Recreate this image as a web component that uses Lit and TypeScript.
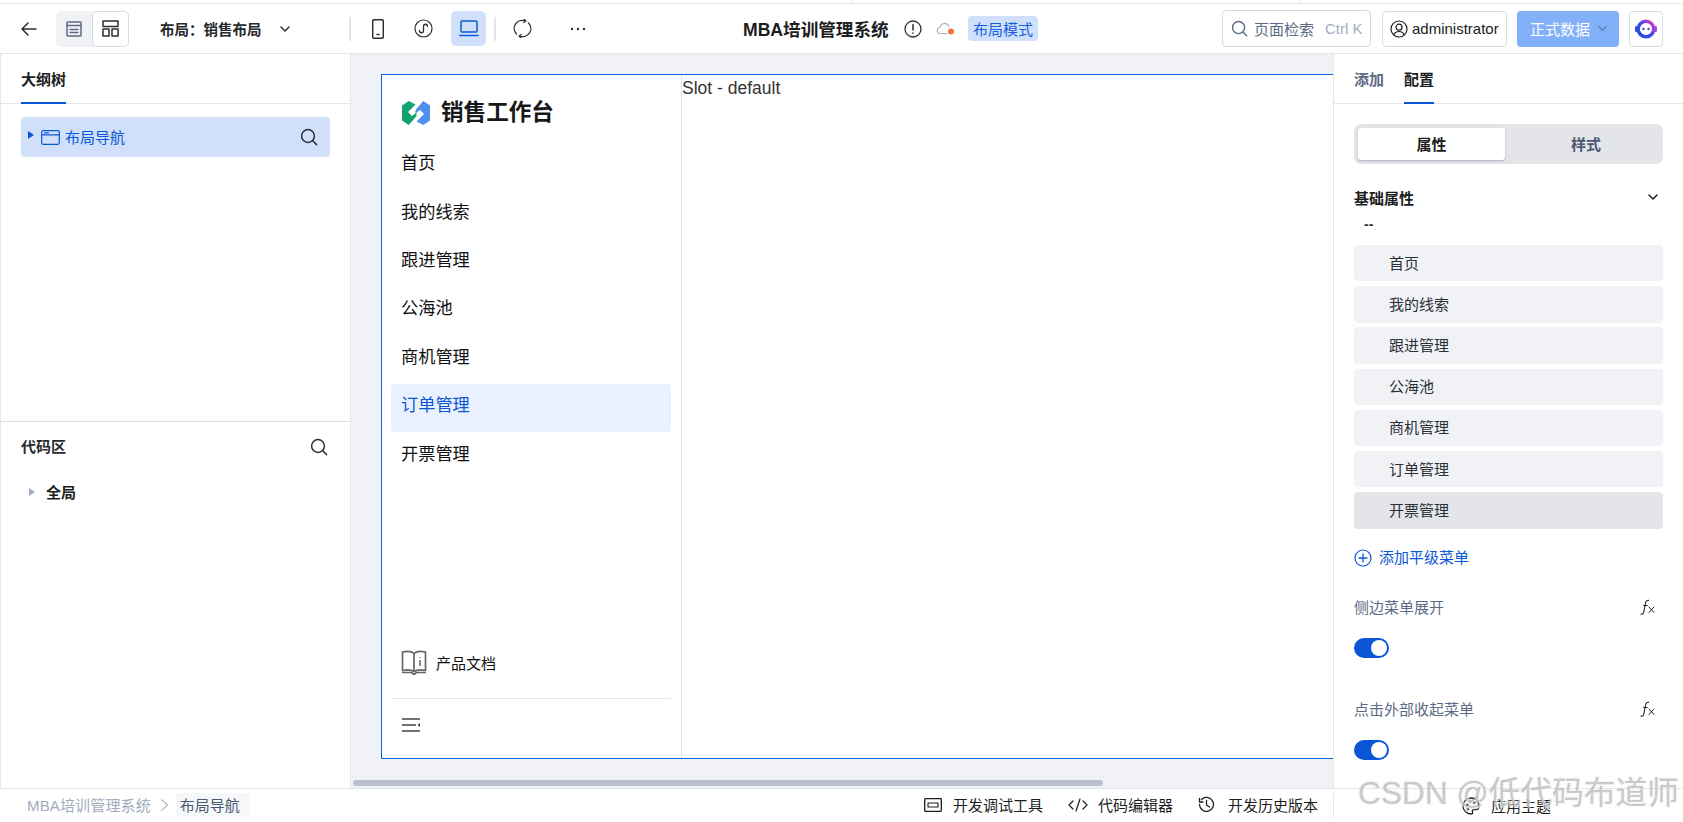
import { LitElement, html, css, svg } from "lit";
import { customElement } from "lit/decorators.js";

const s = (w: number, h: number, vb: string, body: any, cls = "") =>
  html`<svg class=${cls} width=${w} height=${h} viewBox=${vb} fill="none" stroke="currentColor" stroke-width="1.5" stroke-linecap="round" stroke-linejoin="round">${body}</svg>`;

const searchIcon = (size = 18) => s(size, size, "0 0 18 18", svg`<circle cx="8" cy="8" r="6.4"/><path d="M12.7 12.7 16.6 16.6"/>`);
const chevron = (size = 12) => s(size, size, "0 0 12 12", svg`<path d="M2 4l4 4 4-4"/>`);
const fx = () => html`<svg width="16" height="16" viewBox="0 0 16 16" fill="none" stroke="#1f2329" stroke-width="1.1" stroke-linecap="round"><path d="M1 15c2 .4 2.6-.6 3-3l1.6-8c.4-2 1.400-3 3-2.600"/><path d="M3.600 6.500h3.600"/><path d="M9 8l5 5.500M14 8l-5 5.500" stroke-width="1"/></svg>`;

const menu = ["首页", "我的线索", "跟进管理", "公海池", "商机管理", "订单管理", "开票管理"];

@customElement("app-root")
export class AppRoot extends LitElement {
  static styles = css`
    :host {
      display: block;
      position: relative;
      width: 1683px;
      height: 822px;
      overflow: hidden;
      background: #fff;
      color: #1b1d21;
      font-family: "Liberation Sans", "Noto Sans CJK SC", sans-serif;
      font-size: 15px;
    }
    * { box-sizing: border-box; }
    svg { display: block; flex: none; }

    .strip { height: 4px; display: flex; border-bottom: 1px solid #e4e6ea; }
    .strip i { width: 448px; border-right: 1px solid #e4e6ea; }
    .strip i:first-child { width: 853px; }

    .top { height: 50px; display: flex; align-items: center; border-bottom: 1px solid #e2e5ea; padding: 0 20px 0 21px; }
    .top-left { width: 722px; flex: none; display: flex; align-items: center; }
    .back { color: #2b2f36; margin-right: 19px; }
    .view-group { display: flex; width: 73px; height: 36px; background: #f0f2f5; border-radius: 5px; }
    .view-a { width: 36px; display: flex; align-items: center; justify-content: center; color: #5d6b85; }
    .view-b { width: 37px; display: flex; align-items: center; justify-content: center; background: #fff; border: 1px solid #d9dce3; border-radius: 5px; color: #2b2f36; }
    .layout-name { margin-left: 31px; font-weight: 700; font-size: 14.500px; width: 104px; white-space: nowrap; color: #26292e; }
    .layout-chev { margin-left: 15px; color: #2b2f36; }
    .vr { width: 2px; height: 24px; background: #e3e5e9; flex: none; }
    .vr.first { margin-left: 58px; }
    .vr.second { margin-left: 8px; }
    .tool { width: 35px; height: 35px; flex: none; display: flex; align-items: center; justify-content: center; border-radius: 5px; color: #2b2f36; margin-left: 10px; }
    .tool.t-first { margin-left: 9px; }
    .tool.t-mini { margin-left: 11px; }
    .tool.t-sync { margin-left: 9px; }
    .tool.t-more { margin-left: 20px; }
    .tool.on { background: #d0e0fa; color: #0a5bdc; }
    .title { font-size: 17.600px; font-weight: 700; white-space: nowrap; width: 146px; }
    .center { display: flex; align-items: center; }
    .info { margin-left: 15px; color: #2b2f36; }
    .cloud { margin-left: 14px; }
    .tag { margin-left: 13px; height: 25px; width: 70px; display: flex; align-items: center; justify-content: center; border-radius: 4px; background: #d0e0fa; color: #1460de; font-size: 15px; }
    .top-right { margin-left: auto; display: flex; align-items: center; }
    .search { width: 149px; height: 37px; border: 1px solid #d5d9e2; border-radius: 4px; display: flex; align-items: center; padding-left: 8px; color: #5d6b85; }
    .search span { margin-left: 6px; white-space: nowrap; }
    .search em { font-style: normal; color: #a3adbd; margin-left: 11px; white-space: nowrap; }
    .user { margin-left: 11px; width: 125px; height: 36px; border: 1px solid #d9dce3; border-radius: 4px; display: flex; align-items: center; padding-left: 7px; gap: 4px; }
    .publish { margin-left: 10px; width: 102px; height: 36px; border-radius: 4px; background: #82b1fa; color: #fff; display: flex; align-items: center; padding-left: 13px; white-space: nowrap; }
    .publish svg { margin-left: 7px; color: #5f7fb3; }
    .bot { margin-left: 10px; width: 34px; height: 36px; border: 1px solid #d9dce3; border-radius: 4px; display: flex; align-items: center; justify-content: center; }

    .main { height: 734px; display: flex; }
    .left { width: 351px; flex: none; border-left: 1px solid #e4e6ea; border-right: 1px solid #e2e5ea; }
    .tabs { height: 50px; border-bottom: 1px solid #e2e5ea; display: flex; gap: 20px; }
    .tab { height: 50px; display: flex; align-items: center; font-weight: 700; color: #5d6b85; white-space: nowrap; padding-bottom: 2px; }
    .tab.on { color: #1b1d21; border-bottom: 2px solid #0a56d6; padding-bottom: 0; }
    .outline { height: 368px; border-bottom: 1px solid #dadde5; }
    .outline .tabs { padding-left: 20px; }
    .tree { margin: 13px 20px 0 20px; height: 40px; border-radius: 4px; background: #d0e0fa; display: flex; align-items: center; padding-left: 7px; color: #0a56d6; }
    .tree .frame-icon { margin-left: 1px; }
    .tree .name { margin-left: 5px; white-space: nowrap; padding-bottom: 2px; }
    .tree .mag { margin-left: auto; margin-right: 12px; color: #2b2f36; }
    .caret { width: 0; height: 0; border-style: solid; border-width: 4px 0 4px 6px; border-color: transparent transparent transparent currentColor; margin-right: 6px; flex: none; margin-top: -4px; }
    .code-head { height: 50px; display: flex; align-items: center; justify-content: space-between; padding: 0 22px 0 20px; font-weight: 700; color: #26292e; }
    .code-head span { padding-bottom: 3px; }
    .code-head svg { color: #2b2f36; }
    .code-row { height: 40px; display: flex; align-items: center; padding-left: 28px; font-weight: 700; }
    .code-row span:last-child { padding-bottom: 2px; }
    .code-row .caret { color: #a3adbd; margin: 0 11px 0 0; }

    .canvas { flex: 1; min-width: 0; background: #f0f2f5; padding: 20px 0 0 30px; display: flex; flex-direction: column; }
    .frame { height: 685px; background: #fff; border: 1px solid #0f62e6; border-right: 0; display: flex; flex: none; }
    .side { width: 300px; flex: none; border-right: 1px solid #e5e5e5; display: flex; flex-direction: column; color: #111; }
    .logo { display: flex; align-items: center; gap: 11px; padding: 26px 0 13px 20px; }
    .logo b { font-size: 22.600px; line-height: 24px; white-space: nowrap; color: #17181a; }
    .menu { flex: 1; padding-top: 4px; }
    .item { height: 48.400px; margin: 0 10px 0 9px; padding: 0 0 9px 10px; display: flex; align-items: center; font-size: 17.200px; border-radius: 4px; }
    .item.on { background: #eaf1fe; color: #0a56d6; }
    .docs { height: 40px; display: flex; align-items: center; padding-left: 19px; gap: 9px; font-size: 15px; }
    .side-foot { margin: 15.500px 10px 0 9px; border-top: 1px solid #e5e5e5; height: 60px; padding: 19px 0 0 11px; }
    .slot { font-size: 17.500px; line-height: 20px; color: #333; white-space: nowrap; padding-top: 3px; }
    .hbar { width: 750px; height: 6px; margin: 21px 0 0 -28px; border-radius: 3px; background: #b9c0cc; flex: none; }

    .right { width: 350px; flex: none; border-left: 1px solid #e2e5ea; overflow: hidden; }
    .right .tabs { padding-left: 20px; }
    .body { padding: 20px 20px 0 20px; }
    .seg { height: 40px; border-radius: 7px; background: #e3e5e9; padding: 4px; display: flex; font-weight: 700; }
    .seg div { display: flex; align-items: center; justify-content: center; padding-bottom: 2px; }
    .seg .a { width: 147px; background: #fff; border-radius: 3px; box-shadow: 0 1px 2px rgba(60, 70, 90, .35); }
    .seg .b { flex: 1; color: #4a5a73; padding-left: 8px; }
    .group { margin-top: 21px; height: 24px; display: flex; align-items: center; justify-content: space-between; padding-right: 4px; font-weight: 700; }
    .dash { margin: 7px 0 0 10px; height: 16px; font-size: 14px; line-height: 16px; font-weight: 700; color: #333; }
    .rows { margin-top: 13px; display: flex; flex-direction: column; gap: 4.800px; }
    .row { height: 36.400px; border-radius: 4px; background: #f0f2f5; display: flex; align-items: center; padding: 0 0 2px 35px; color: #2b2f36; }
    .row.sel { background: #e3e5e9; }
    .add { margin-top: 19px; height: 20px; display: flex; align-items: center; gap: 7px; color: #0a56d6; }
    .add span { padding-bottom: 2px; }
    .prop { height: 20px; display: flex; align-items: center; justify-content: space-between; color: #5d6b85; padding-right: 7px; }
    .prop.p1 { margin-top: 29px; }
    .prop.p2 { margin-top: 41px; }
    .switch { margin-top: 21px; width: 35px; height: 20px; border-radius: 10px; background: #0a56d6; display: flex; justify-content: flex-end; align-items: center; padding-right: 2px; }
    .switch i { width: 16px; height: 16px; border-radius: 50%; background: #fff; }

    .foot { height: 34px; border-top: 1px solid #e2e5ea; display: flex; align-items: center; }
    .crumbs { display: flex; align-items: center; padding: 0 0 2px 27px; color: #a0abbd; font-size: 15px; white-space: nowrap; }
    .crumbs span { letter-spacing: .15px; }
    .crumbs svg { margin: 0 7px 0 9px; }
    .crumbs b { font-weight: 400; color: #4a5a73; background: #f6f7f9; padding: 1px 10px 1px 4px; }
    .actions { margin-left: auto; display: flex; align-items: center; padding: 0 15px 2px 0; color: #1b1d21; white-space: nowrap; }
    .act { display: flex; align-items: center; gap: 11px; margin-left: 25px; }
    .act .tight { margin-left: -1px; }
    .act .wide { margin-left: 2px; }
    .theme { width: 350px; height: 25px; flex: none; border-left: 1px solid #e2e5ea; display: flex; align-items: center; padding-left: 128px; gap: 11px; }

    .mark { position: absolute; left: 1358px; top: 773px; font-size: 31.700px; line-height: 40px; white-space: nowrap; color: rgba(175, 175, 175, .62); text-shadow: 1px 1px 2px rgba(255, 255, 255, .9), 0 0 2px rgba(120, 120, 120, .3); pointer-events: none; }
  `;

  render() {
    return html`
      <div class="strip"><i></i><i></i></div>
      <header class="top">
        <div class="top-left">
          ${s(16, 16, "0 0 16 16", svg`<path d="M15 8H1M7 2 1 8l6 6"/>`, "back")}
          <div class="view-group">
            <div class="view-a">${s(16, 16, "0 0 16 16", svg`<rect x="1" y="1" width="14" height="14" rx=".8"/><path d="M1 4.500h14M4 8.500h8M4 11.500h8" stroke-width="1.300"/>`)}</div>
            <div class="view-b">${s(17, 17, "0 0 17 17", svg`<rect x="1" y="1" width="15" height="5.500"/><rect x="1" y="9" width="6" height="7"/><rect x="10" y="9" width="6" height="7"/>`)}</div>
          </div>
          <div class="layout-name">布局：销售布局</div>
          <div class="layout-chev">${chevron()}</div>
          <div class="vr first"></div>
          <div class="tool t-first">${s(12, 20, "0 0 12 20", svg`<rect x=".7" y=".7" width="10.600" height="18.600" rx="1.600"/><path d="M5 15.500h2"/>`)}</div>
          <div class="tool t-mini">${s(19, 19, "0 0 19 19", svg`<circle cx="9.500" cy="9.500" r="8.500" stroke-width="1.200"/><path d="M5.500 11.500c0 3 4 3 4 0v-4c0-3 4-3 4 0" stroke-width="1.300"/>`)}</div>
          <div class="tool on">${s(20, 17, "0 0 20 17", svg`<rect x="2" y="1" width="16" height="11" rx="1"/><path d="M.8 15.500h18.400"/>`)}</div>
          <div class="vr second"></div>
          <div class="tool t-sync">${s(19, 19, "0 0 19 19", svg`<path d="M3.500 15A8 8 0 0 1 12 1.900M15.500 4a8 8 0 0 1-8.500 13.100" stroke-width="1.300"/><path d="M11 0l2 2-2.400 1.600M8 19l-2-2 2.400-1.600" stroke-width="1.100"/>`)}</div>
          <div class="tool t-more"><svg width="16" height="4" viewBox="0 0 16 4" fill="#2b2f36"><circle cx="2" cy="2" r="1.200"/><circle cx="8" cy="2" r="1.200"/><circle cx="14" cy="2" r="1.200"/></svg></div>
        </div>
        <div class="center">
          <div class="title">MBA培训管理系统</div>
          ${s(18, 18, "0 0 18 18", svg`<circle cx="9" cy="9" r="8" stroke-width="1.300"/><path d="M9 4.500v5.500M9 13v.2" stroke-width="1.500"/>`, "info")}
          <svg class="cloud" width="19" height="15" viewBox="0 0 19 15" fill="none" stroke="#a9b2c1" stroke-width="1.200" stroke-linecap="round"><path d="M11 12.500H4.500a3 3 0 0 1-.5-6 4.600 4.600 0 0 1 8.800-1.200"/><circle cx="15" cy="10.500" r="3" fill="#f0743a" stroke="none"/></svg>
          <div class="tag">布局模式</div>
        </div>
        <div class="top-right">
          <div class="search">${searchIcon(17)}<span>页面检索</span><em>Ctrl K</em></div>
          <div class="user">
            ${s(18, 18, "0 0 18 18", svg`<circle cx="9" cy="9" r="8" stroke-width="1.200"/><circle cx="9" cy="7.200" r="3" stroke-width="1.200"/><path d="M3.800 14.800c1-2.400 3-3.300 5.200-3.300s4.200.9 5.200 3.300" stroke-width="1.200"/>`)}
            <span>administrator</span>
          </div>
          <div class="publish">正式数据${chevron(11)}</div>
          <div class="bot">
            <svg width="22" height="20" viewBox="0 0 22 20" fill="none">
              <defs><linearGradient id="g" x1="0" y1="1" x2="1" y2="0"><stop offset="0" stop-color="#1d4fe8"/><stop offset=".55" stop-color="#4a46e8"/><stop offset=".85" stop-color="#c03ad0"/><stop offset="1" stop-color="#f0803a"/></linearGradient></defs>
              <rect x="0" y="7" width="3" height="6" rx="1.500" fill="#1d4fe8"/>
              <rect x="19" y="7" width="3" height="6" rx="1.500" fill="#a93cdc"/>
              <circle cx="11" cy="10" r="7.800" stroke="url(#g)" stroke-width="3.400"/>
              <circle cx="8.500" cy="10" r="1.200" fill="#3040d8"/><circle cx="13.500" cy="10" r="1.200" fill="#5a40d8"/>
            </svg>
          </div>
        </div>
      </header>

      <div class="main">
        <aside class="left">
          <section class="outline">
            <div class="tabs"><div class="tab on">大纲树</div></div>
            <div class="tree">
              <span class="caret"></span>
              ${s(19, 15, "0 0 19 15", svg`<rect x=".7" y=".7" width="17.600" height="13.600" rx="1.500" stroke-width="1.200"/><path d="M.7 4.800h17.600M3.500 2.800h4" stroke-width="1.200"/>`, "frame-icon")}
              <span class="name">布局导航</span>
              <span class="mag">${searchIcon(18)}</span>
            </div>
          </section>
          <div class="code-head"><span>代码区</span>${searchIcon(18)}</div>
          <div class="code-row"><span class="caret"></span><span>全局</span></div>
        </aside>

        <section class="canvas">
          <div class="frame">
            <nav class="side">
              <div class="logo">
                <svg width="28" height="24" viewBox="0 0 28 24">
                  <path d="M6.700 0 13.500 3.500 6 11 10 15 14.500 11.500 14.500 15 6.700 24 0 19.500 0 4.500Z" fill="#12a36d"/>
                  <path d="M21.300 24 14.500 20.500 22 13 18 9 13.500 12.500 13.500 9 21.300 0 28 4.500 28 19.500Z" fill="#4f8ff0"/>
                </svg>
                <b>销售工作台</b>
              </div>
              <div class="menu">
                ${menu.map((m, i) => html`<div class="item ${i === 5 ? "on" : ""}">${m}</div>`)}
              </div>
              <div class="docs">
                <svg width="26" height="25" viewBox="0 0 26 25" fill="none" stroke="#666" stroke-width="1.700" stroke-linejoin="round">
                  <path d="M13 3.500C11 1.500 6 1 1.500 2v18.500C6 19.500 11 20 13 21.500 15 20 20 19.500 24.500 20.500V2C20 1 15 1.500 13 3.500Z"/>
                  <path d="M13 3.500v18M1 22.500h9.500l2.500 2 2.500-2H25"/>
                  <path d="M19 7v.8M19 10v6" stroke-width="1.500"/>
                </svg>
                <span>产品文档</span>
              </div>
              <div class="side-foot">
                <svg width="18" height="14" viewBox="0 0 18 14" fill="none" stroke="#444" stroke-width="1.500">
                  <path d="M0 1h18M0 7h14M0 13h18"/><path d="M18 5 15.500 7 18 9Z" fill="#444" stroke="none"/>
                </svg>
              </div>
            </nav>
            <div class="slot">Slot - default</div>
          </div>
          <div class="hbar"></div>
        </section>

        <aside class="right">
          <div class="tabs">
            <div class="tab">添加</div>
            <div class="tab on">配置</div>
          </div>
          <div class="body">
            <div class="seg"><div class="a">属性</div><div class="b">样式</div></div>
            <div class="group"><span>基础属性</span>${chevron()}</div>
            <div class="dash">--</div>
            <div class="rows">
              ${menu.map((m, i) => html`<div class="row ${i === 6 ? "sel" : ""}">${m}</div>`)}
            </div>
            <div class="add">
              ${s(18, 18, "0 0 18 18", svg`<circle cx="9" cy="9" r="8" stroke-width="1.200"/><path d="M9 5v8M5 9h8" stroke-width="1.300"/>`)}
              <span>添加平级菜单</span>
            </div>
            <div class="prop p1"><span>侧边菜单展开</span>${fx()}</div>
            <div class="switch"><i></i></div>
            <div class="prop p2"><span>点击外部收起菜单</span>${fx()}</div>
            <div class="switch"><i></i></div>
          </div>
        </aside>
      </div>

      <footer class="foot">
        <div class="crumbs">
          <span>MBA培训管理系统</span>
          <svg width="9" height="14" viewBox="0 0 9 14" fill="none" stroke="#b5bdca" stroke-width="1.300"><path d="M1.500 1.500 7.500 7l-6 5.500"/></svg>
          <b>布局导航</b>
        </div>
        <div class="actions">
          <div class="act">${s(18, 14, "0 0 18 14", svg`<rect x=".7" y=".7" width="16.600" height="12.600" rx=".5" stroke-width="1.300"/><path d="M4 5h10v4H4Z" stroke-width="1.100"/>`)}<span>开发调试工具</span></div>
          <div class="act">${s(20, 14, "0 0 20 14", svg`<path d="M5 3 1 7l4 4M15 3l4 4-4 4M12 1 8 13" stroke-width="1.200"/>`)}<span class="tight">代码编辑器</span></div>
          <div class="act">${s(17, 17, "0 0 17 17", svg`<path d="M3.500 3.500A7 7 0 1 1 1.500 8.500M1.500 2.500v3.500h3.500M8.500 4.500V9l3 2" stroke-width="1.300"/>`)}<span class="wide">开发历史版本</span></div>
        </div>
        <div class="theme">
          ${s(18, 18, "0 0 18 18", svg`<path d="M9 1a8 8 0 0 0 0 16c1.500 0 2-1 1.500-2s0-2.500 1.500-2.500h2.500c1.500 0 2.500-1 2.500-3C17 4 13.500 1 9 1Z" stroke-width="1.300"/><circle cx="5" cy="8" r="1" stroke-width="1"/><circle cx="8" cy="4.800" r="1" stroke-width="1"/><circle cx="12" cy="5.500" r="1" stroke-width="1"/><circle cx="5.800" cy="12" r="1" stroke-width="1"/>`)}
          <span>应用主题</span>
        </div>
      </footer>

      <div class="mark">CSDN @低代码布道师</div>
    `;
  }
}
